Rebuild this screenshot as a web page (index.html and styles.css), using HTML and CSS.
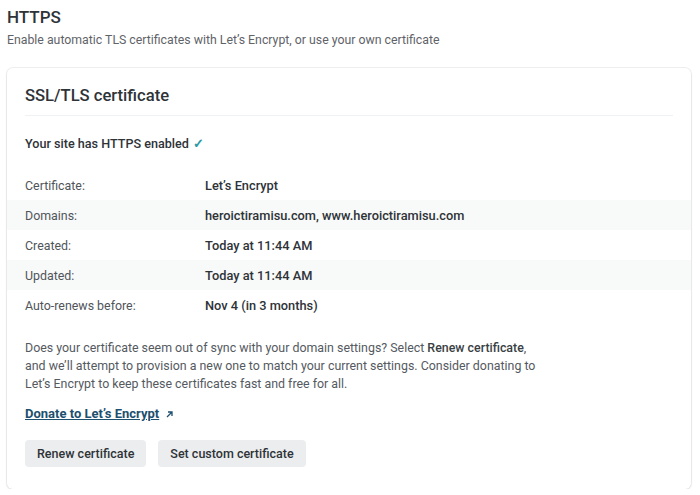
FILE: index.html
```html
<!DOCTYPE html>
<html>
<head>
<meta charset="utf-8">
<link rel="stylesheet" href="styles.css">
</head>
<body>
<div class="page">
  <header class="section-head">
    <h1 class="section-title">HTTPS</h1>
    <p class="section-sub">Enable automatic TLS certificates with Let’s Encrypt, or use your own certificate</p>
  </header>
  <section class="card">
    <h2 class="card-title">SSL/TLS certificate</h2>
    <p class="status">Your site has HTTPS enabled <span class="check">✓</span></p>
    <dl class="details">
      <div class="row"><dt>Certificate:</dt><dd>Let’s Encrypt</dd></div>
      <div class="row alt"><dt>Domains:</dt><dd>heroictiramisu.com, www.heroictiramisu.com</dd></div>
      <div class="row"><dt>Created:</dt><dd>Today at 11:44 AM</dd></div>
      <div class="row alt"><dt>Updated:</dt><dd>Today at 11:44 AM</dd></div>
      <div class="row"><dt>Auto-renews before:</dt><dd>Nov 4 (in 3 months)</dd></div>
    </dl>
    <p class="note">Does your certificate seem out of sync with your domain settings? Select <strong>Renew certificate</strong>, and we’ll attempt to provision a new one to match your current settings. Consider donating to Let’s Encrypt to keep these certificates fast and free for all.</p>
    <p class="donate"><a href="#">Donate to Let’s Encrypt</a> <svg class="ext" width="9" height="9" viewBox="0 0 9 9"><path d="M2 7L7 2M3 2h4v4" fill="none" stroke="#1d4f6e" stroke-width="1.3"/></svg></p>
    <div class="actions">
      <button class="btn">Renew certificate</button>
      <button class="btn">Set custom certificate</button>
    </div>
  </section>
</div>
</body>
</html>
```
FILE: styles.css
```css
* { box-sizing: border-box; }
html, body { margin: 0; padding: 0; background: #fff; }
body { font-family: Roboto, "Noto Sans", sans-serif; color: #2e3338; }
.page { padding: 6px 9px 0 7px; }
.section-title { margin: 0; font-size: 17px; font-weight: 500; line-height: 22px; color: #2e3338; }
.section-sub { margin: 4px 0 0; font-size: 12.3px; line-height: 17px; color: #5f6368; }
.card {
  margin-top: 19px;
  border-radius: 6px;
  box-shadow: 0 0 0 1px rgba(0,0,0,0.06), 0 1px 3px rgba(0,0,0,0.08);
  padding: 17px 0 22px;
}
.card-title {
  margin: 0 18px; padding: 0 0 8px;
  font-size: 16.6px; font-weight: 500; line-height: 22px;
  border-bottom: 1px solid #f0f1f2;
}
.status { margin: 19px 18px 18px; font-size: 12.6px; font-weight: 500; line-height: 17px; }
.check { color: #2b9aa6; font-weight: 600; margin-left: 1px; }
.details { margin: 0; }
.row { display: flex; height: 30px; align-items: center; padding: 0 18px; font-size: 12.4px; }
.row.alt { background: #f8f9f9; }
.row dt { width: 180px; color: #50555a; }
.row dd { margin: 0; font-size: 12.8px; font-weight: 500; color: #2e3338; }
.note { margin: 19px 18px 0; font-size: 12.4px; line-height: 18px; color: #555a5f; max-width: 520px; }
.note strong { font-weight: 500; color: #3a3f44; }
.donate { margin: 12px 18px 0; font-size: 13px; line-height: 17px; }
.donate a { color: #1d4f6e; font-weight: 700; text-decoration: underline; }
.ext { margin-left: 3px; vertical-align: -1px; }
.actions { display: flex; gap: 12px; margin: 18px 18px 0; }
.btn {
  font-family: inherit; font-size: 12.5px; font-weight: 500; color: #2e3338;
  background: #ebedee; border: 0; border-radius: 4px;
  height: 27px; padding: 0 12px;
}
```
